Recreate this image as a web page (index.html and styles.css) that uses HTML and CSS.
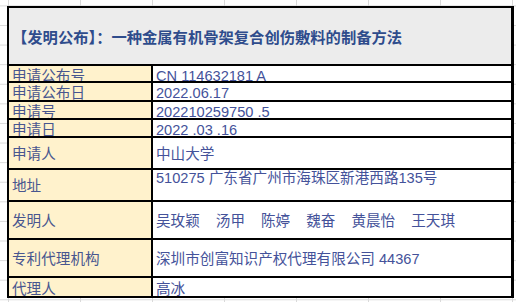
FILE: index.html
```html
<!DOCTYPE html>
<html lang="zh-CN">
<head>
<meta charset="UTF-8">
<meta name="viewport" content="width=device-width, initial-scale=1.0">
<title>发明公布</title>
<link rel="stylesheet" href="styles.css">
</head>
<body>
<div class="sheet">
  <div class="title">【发明公布】：一种金属有机骨架复合创伤敷料的制备方法</div>
  <div class="row h16">
    <div class="label">申请公布号</div>
    <div class="value">CN 114632181 A</div>
  </div>
  <div class="row h17">
    <div class="label">申请公布日</div>
    <div class="value">2022.06.17</div>
  </div>
  <div class="row h16">
    <div class="label">申请号</div>
    <div class="value">202210259750 .5</div>
  </div>
  <div class="row h16">
    <div class="label">申请日</div>
    <div class="value">2022 .03 .16</div>
  </div>
  <div class="row h30">
    <div class="label">申请人</div>
    <div class="value">中山大学</div>
  </div>
  <div class="row h30">
    <div class="label">地址</div>
    <div class="value top">510275 广东省广州市海珠区新港西路135号</div>
  </div>
  <div class="row h37">
    <div class="label">发明人</div>
    <div class="value names">
      <span>吴玫颖</span><span>汤甲</span><span>陈婷</span><span>魏奋</span><span>黄晨怡</span><span>王天琪</span>
    </div>
  </div>
  <div class="row h36">
    <div class="label">专利代理机构</div>
    <div class="value">深圳市创富知识产权代理有限公司 44367</div>
  </div>
  <div class="row h16 last">
    <div class="label">代理人</div>
    <div class="value">高冰</div>
  </div>
</div>
</body>
</html>
```

FILE: styles.css
```css
body {
  margin: 0;
  width: 516px;
  height: 302px;
  overflow: hidden;
  font-family: "Liberation Sans", "Noto Sans CJK SC", sans-serif;
  background-color: #fff;
  background-image:
    linear-gradient(to right, #dadada 1px, transparent 1px),
    linear-gradient(to bottom, #dadada 1px, transparent 1px);
  background-size: 72px 100%, 100% 19.6px;
  background-position: 8px 0, 0 5.4px;
}
.sheet {
  margin: 6px 0 0 7px;
  width: 507px;
  height: 292px;
  box-sizing: border-box;
  border: 2px solid #000;
  border-right-width: 3px;
  background: #fff;
  display: flex;
  flex-direction: column;
}
.title {
  height: 58px;
  box-sizing: border-box;
  border-bottom: 2px solid #000;
  background: #ececec;
  display: flex;
  align-items: center;
  padding: 1px 0 0 3px;
  font-size: 15.3px;
  font-weight: bold;
  color: #2f4c8c;
  white-space: nowrap;
}
.row {
  display: grid;
  grid-template-columns: 144px 1fr;
  box-sizing: border-box;
  border-bottom: 2px solid #000;
  overflow: hidden;
  font-size: 14.6px;
  color: #48568f;
}
.row.last {
  border-bottom: none;
}
.h16 { height: 18px; }
.h17 { height: 19px; }
.h30 { height: 32px; }
.h36 { height: 38px; }
.h37 { height: 39px; }
.label {
  background: #fff2cc;
  border-right: 2px solid #000;
  padding: 2px 0 0 3px;
  display: flex;
  align-items: center;
  white-space: nowrap;
  line-height: 16px;
}
.value {
  padding: 2px 0 0 3px;
  display: flex;
  align-items: center;
  white-space: nowrap;
  line-height: 16px;
  color: #44529a;
}
.value.top {
  align-items: flex-start;
  padding-top: 0;
}
.row.last .label,
.row.last .value {
  padding-top: 3px;
}
.names {
  gap: 16px;
}
```
